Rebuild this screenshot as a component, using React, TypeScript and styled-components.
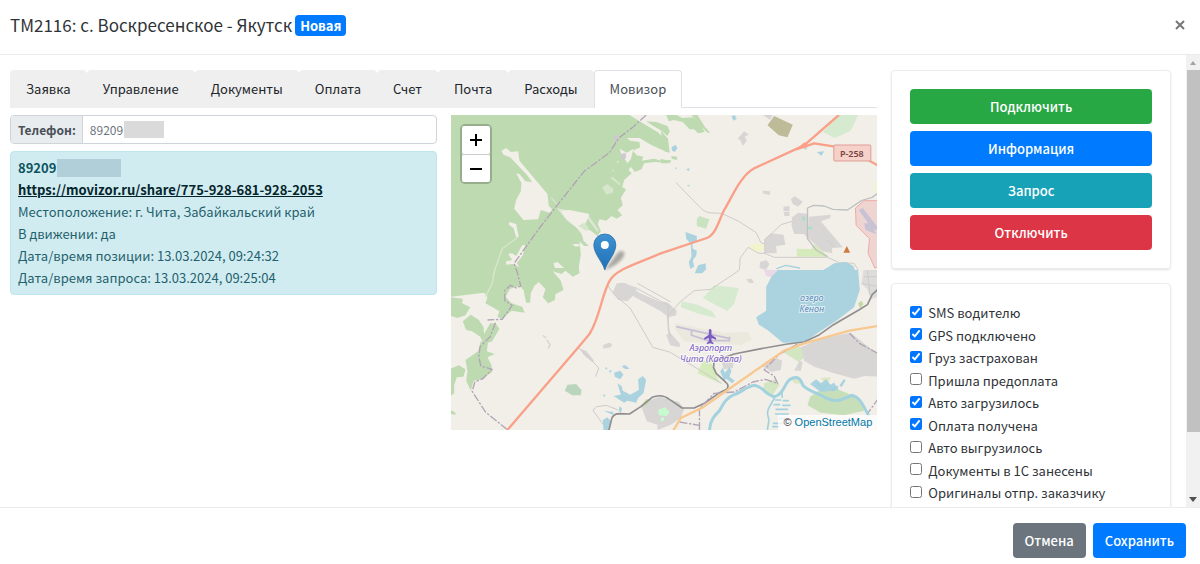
import React from "react";
import styled, { createGlobalStyle } from "styled-components";

const GlobalStyle = createGlobalStyle`
  *, *::before, *::after { box-sizing: border-box; }
  body {
    margin: 0;
    background: #fff;
    color: #2f3337;
    font: 400 13px/22px "Noto Sans CJK SC", "Noto Sans", sans-serif;
  }
  button, input { font: inherit; }
`;

const Modal = styled.div`
  display: flex;
  flex-direction: column;
  height: 100vh;
`;

const Header = styled.header`
  display: flex;
  align-items: center;
  flex: none;
  height: 55px;
  padding: 0 10px 4px;
  gap: 3px;
  border-bottom: 1px solid #e9ecef;
`;

const Title = styled.h1`
  margin: 0;
  font-size: 17px;
  font-weight: 400;
  line-height: 28px;
`;

const Badge = styled.span`
  padding: 0 5px;
  border-radius: 4px;
  background: #007bff;
  color: #fff;
  font-size: 13px;
  font-weight: 700;
  line-height: 21px;
`;

const CloseButton = styled.button`
  display: flex;
  margin-left: auto;
  padding: 5px;
  border: 0;
  background: none;
  color: #777;
`;

const Viewport = styled.div`
  display: flex;
  flex: 1;
  min-height: 0;
`;

const Content = styled.main`
  flex: 1;
  min-width: 0;
  padding: 15px 8px 15px 3px;
  overflow-y: auto;
  scrollbar-width: none;
`;

const Row = styled.div`
  display: flex;
  align-items: flex-start;
`;

const Column = styled.div<{ $share: number }>`
  flex: 0 0 ${(p) => p.$share}%;
  min-width: 0;
  padding: 0 7px;
`;

const TabBar = styled.nav`
  display: flex;
  align-items: flex-start;
  height: 38px;
  border-bottom: 1px solid #dee2e6;
`;

const Tab = styled.button<{ $active?: boolean }>`
  flex: none;
  height: 38px;
  padding: 0 15px;
  border: 1px solid ${(p) => (p.$active ? "#dee2e6" : "#efefef")};
  border-bottom-color: ${(p) => (p.$active ? "#fff" : "#efefef")};
  border-radius: 4px 4px 0 0;
  background: ${(p) => (p.$active ? "#fff" : "#efefef")};
  color: ${(p) => (p.$active ? "#495057" : "#212529")};
`;

const Pane = styled.div`
  display: flex;
  align-items: flex-start;
  margin: 7px -7px 0;
`;

const PhoneGroup = styled.div`
  display: flex;
  height: 29px;
  margin-bottom: 7px;
  border: 1px solid #ced4da;
  border-radius: 4px;
  overflow: hidden;
  font-size: 12px;
`;

const PhoneLabel = styled.label`
  padding: 0 6px 0 7px;
  border-right: 1px solid #ced4da;
  background: #e9ecef;
  color: #495057;
  font-weight: 700;
  line-height: 28px;
`;

const PhoneField = styled.div`
  display: flex;
  align-items: center;
  flex: 1;
  padding-left: 7px;
`;

const PhoneInput = styled.input`
  width: 34px;
  padding: 0;
  border: 0;
  outline: 0;
  color: #6c757d;
`;

const Redaction = styled.span<{ $large?: boolean }>`
  display: inline-block;
  width: ${(p) => (p.$large ? 64 : 40)}px;
  height: ${(p) => (p.$large ? 18 : 17)}px;
  background: ${(p) => (p.$large ? "#b0cfd8" : "#dadada")};
`;

const Alert = styled.section`
  padding: 5px 7px;
  border: 1px solid #bee5eb;
  border-radius: 4px;
  background: #d1ecf1;
  color: #1f616c;
`;

const AlertLine = styled.div<{ $strong?: boolean }>`
  display: flex;
  align-items: center;
  height: 22px;
  gap: 1px;
  color: ${(p) => (p.$strong ? "#0c5460" : "inherit")};
  font-weight: ${(p) => (p.$strong ? 700 : 400)};
`;

const ShareLink = styled.a`
  color: #04252b;
  text-decoration: underline;
`;

const MapFrame = styled.div`
  position: relative;
  height: 315px;
  overflow: hidden;
  background: #f2efe9;
`;

const MapDrawing = styled.svg`
  display: block;
  width: 100%;
  height: 100%;
`;

const ZoomControl = styled.div`
  position: absolute;
  top: 9px;
  left: 9px;
  display: flex;
  flex-direction: column;
  border: 2px solid rgba(0, 0, 0, 0.2);
  border-radius: 5px;
  background-clip: padding-box;
`;

const ZoomButton = styled.button`
  display: flex;
  align-items: center;
  justify-content: center;
  width: 28px;
  height: 28px;
  padding: 0;
  border: 0;
  border-radius: 2px;
  background: #fff;
  color: #000;
  & + & { border-top: 1px solid #ccc; }
`;

const Attribution = styled.div`
  position: absolute;
  right: 0;
  bottom: 0;
  padding: 0 5px;
  background: rgba(255, 255, 255, 0.75);
  color: #333;
  font: 11px/15px "Liberation Sans", Arial, sans-serif;
  a { color: #0078a8; text-decoration: none; }
`;

const Card = styled.section`
  display: flex;
  flex-direction: column;
  padding: 18px;
  margin-bottom: 14px;
  border: 1px solid #ececec;
  border-radius: 4px;
  box-shadow: 0 1px 2px rgba(0, 0, 0, 0.12);
`;

const Button = styled.button<{ $color: string }>`
  height: 35px;
  padding: 0 12px;
  border: 0;
  border-radius: 4px;
  background: ${(p) => p.$color};
  color: #fff;
  font-weight: 500;
`;

const ButtonStack = styled.div`
  display: flex;
  flex-direction: column;
  gap: 7px;
`;

const CheckList = styled.div`
  display: flex;
  flex-direction: column;
  justify-content: space-between;
  min-height: 202px;
`;

const CheckRow = styled.label`
  display: flex;
  align-items: center;
  gap: 6px;
  height: 22px;
`;

const CheckBox = styled.input`
  flex: none;
  width: 12px;
  height: 12px;
  margin: 0 0 3px;
  accent-color: #0075ff;
`;

const ScrollTrack = styled.div`
  display: flex;
  flex-direction: column;
  flex: none;
  width: 14px;
  background: #f1f1f1;
`;

const ScrollArrow = styled.svg`
  display: block;
  flex: none;
  width: 14px;
  height: 15px;
`;

const ScrollThumb = styled.div`
  flex: 0 0 80%;
  margin-left: 1px;
  background: #c1c1c1;
`;

const ScrollSpace = styled.div`
  flex: 1;
`;

const Footer = styled.footer`
  display: flex;
  align-items: center;
  justify-content: flex-end;
  flex: none;
  gap: 7px;
  height: 57px;
  padding: 9px 14px 0;
  border-top: 1px solid #e9ecef;
`;

const tabs = ["Заявка", "Управление", "Документы", "Оплата", "Счет", "Почта", "Расходы", "Мовизор"];

const details = [
  "Местоположение: г. Чита, Забайкальский край",
  "В движении: да",
  "Дата/время позиции: 13.03.2024, 09:24:32",
  "Дата/время запроса: 13.03.2024, 09:25:04",
];

const actions = [
  { text: "Подключить", color: "#28a745" },
  { text: "Информация", color: "#007bff" },
  { text: "Запрос", color: "#17a2b8" },
  { text: "Отключить", color: "#dc3545" },
];

const checks: [string, boolean][] = [
  ["SMS водителю", true],
  ["GPS подключено", true],
  ["Груз застрахован", true],
  ["Пришла предоплата", false],
  ["Авто загрузилось", true],
  ["Оплата получена", true],
  ["Авто выгрузилось", false],
  ["Документы в 1С занесены", false],
  ["Оригиналы отпр. заказчику", false],
];

function CityMap() {
  return (
    <MapDrawing viewBox="0 0 427 315" preserveAspectRatio="xMidYMid slice" role="img" aria-label="Карта">
      <defs>
        <linearGradient id="pin" x1="0" y1="0" x2="0" y2="1">
          <stop offset="0" stopColor="#3f93d2" />
          <stop offset="1" stopColor="#1f6fb5" />
        </linearGradient>
        <filter id="soft" x="-30%" y="-30%" width="160%" height="160%">
          <feGaussianBlur stdDeviation="1.6" />
        </filter>
      </defs>
      <g transform="scale(0.33333) translate(0 -15)" strokeLinejoin="round">
        <rect x="0" y="15" width="1290" height="950" fill="#f2efe9" />

        {/* forest */}
        <g fill="#bddab1">
          <path d="M0 15H536L560 30 596 52 620 66 652 96 657 128 628 117 600 104 566 84 528 84 538 92 566 96 568 112 546 122 558 136 578 140 572 152 610 146 632 152 660 150V158L612 156 580 160 572 178 552 186 540 170 533 180 543 190 520 210 514 232 526 238 510 264 516 286 500 300 514 316 498 326 482 318 466 332 446 328 441 342 450 364 440 378 420 362 400 352 416 312 356 300 330 302 348 330 376 352 392 368 398 392 414 408 400 408 386 394 390 434 384 470 386 490 366 500 344 482 332 492 306 484 330 512 338 540 314 552 312 570 292 580 276 562 284 538 264 516 250 528 240 550 238 578 226 578 218 540 206 528 178 536 164 560 182 580 214 590 222 608 182 602 154 628 140 620 146 604 104 580 110 562 100 548 0 560Z" />
          <path d="M0 562L36 566 34 580 58 592 44 616 20 624 0 618Z" />
          <path d="M36 634L60 614 84 630 98 650 100 672 118 640 134 640 146 656 124 694 100 702 88 680 64 664 46 660Z" />
          <path d="M90 694L112 696 108 724 132 732 110 742 122 766 124 786 92 808 68 812 60 842 46 812 50 782 44 750 82 724Z" />
          <path d="M0 776L24 766 44 778 38 800 18 802 10 826 10 850 0 858Z M0 900L14 908V914L0 912Z" />
          <path d="M586 34L616 36 650 48 657 64 650 78 632 62 604 46Z M646 15H678L694 24 726 22 748 42 762 66 742 70 730 58 716 58 696 36 668 30 654 34Z M722 15H740L762 50 778 68 770 68 748 46Z M630 62L652 86 654 128 638 122Z M630 146L654 152V160H630Z M662 138L680 140 678 150 662 146Z" />
          <path d="M738 326L746 318 776 328 766 356 738 348Z" fill="#c9e3c0" />
          <path d="M342 842L350 824 376 822 392 840 390 856 364 856Z" fill="#b9d6bd" />
        </g>
        <g fill="#f2efe9">
          <path d="M152 122L166 114 180 126 202 124 206 152 290 252 294 288 304 298 296 308 270 300 262 328 218 330 190 296 196 270 210 244 212 220 196 190 206 192 224 214 244 216 228 194 178 142 158 134Z" />
          <path d="M176 336L196 342 204 382 196 382 188 354 174 344Z M172 432L184 430 196 438 214 406 224 406 216 436 198 460 206 472 188 462 166 464 166 454 184 450Z M308 460L320 456 340 474 312 474Z M364 402L384 402 388 408 374 410Z M506 116L528 128 548 116 540 148 530 160 512 132Z" />
          <path d="M318 294L346 300 410 312 444 360 440 366 408 324 382 330 404 372 400 384 376 352 344 326 330 310Z" opacity=".6" />
          <path d="M300 262L322 286M126 500L132 480 154 416 198 384M132 480L124 520 104 560" fill="none" stroke="#d8e6cc" strokeWidth="4" />
        </g>
        <path d="M454 232L470 222 488 236 486 248 466 254Z M478 204L486 200 510 222 506 226Z M482 184L486 178 492 184Z M496 154L504 152 502 162Z M382 348L400 338 414 352 408 364Z" fill="#d5e6cb" />
        <path d="M488 78L496 74 504 92 492 96Z M512 132L524 128 526 144 514 150Z" fill="#cfc7d3" />

        {/* parks and fields */}
        <path d="M1116 66L1140 40 1160 15H1222L1200 62 1152 84Z M756 564L790 526 864 534 850 582 830 602 796 586Z M692 574L740 584 784 604 796 624 746 612 690 592Z" fill="#d6ead0" />
        <path d="M950 46L970 18 1026 44 1010 82 984 76Z" fill="#bdbb98" />
        <path d="M1038 416L1082 418 1086 404 1098 404 1132 440 1038 440Z M756 752L778 752 806 816 818 824 740 790Z" fill="#d6ebbb" />
        <path d="M902 402L936 400 940 420 916 428 896 412Z M1272 215H1290V248H1272Z" fill="#f2f4ce" />
        <path d="M996 726L1030 708 1062 714 1066 738 1044 756Z M940 820L976 806 986 824 964 858 936 842Z" fill="#d3e6c2" />
        <path d="M1078 860L1110 838 1150 834 1190 850 1236 880 1240 902 1180 916 1110 908 1070 886Z" fill="#c6dfb9" />
        <path d="M1018 802L1042 798 1048 822 1030 820Z M1108 804L1140 802 1130 824Z" fill="#dce6c4" />

        {/* built-up areas */}
        <g fill="#d8d6d5">
          <path d="M860 86L880 64 894 74 882 80 888 92 876 108 868 90Z M936 15H966L958 30Z M936 242L958 244 956 256 936 250Z" />
          <path d="M1020 268L1032 258 1056 276 1042 290 1026 282Z M998 290L1016 288V304H998Z M1000 306H1016V318H1000Z" />
          <path d="M1024 322L1042 308 1072 312V386L1060 372 1030 372 1022 346Z M1074 320L1140 314 1138 324 1110 334 1176 412 1144 414V430L1116 424 1072 384Z" />
          <path d="M942 388L960 370 998 374 1004 404 976 408 978 430H942Z M928 456L946 450 956 462 946 480 926 474Z" />
          <path d="M486 546L498 520 520 518 552 532 560 546 656 588 660 612 630 604 546 558 530 574 502 570Z M456 706L474 698 484 702 480 712 458 716Z M388 716L406 722 430 752 424 756 398 734Z" />
          <path d="M630 576L648 576 678 602 676 616 654 622 630 604Z M646 674L658 668 688 702 686 712 658 706Z M886 508L902 506 910 518 896 520Z" />
          <path d="M570 886L592 872 626 860 684 876 700 896 690 924 660 944 620 960 620 944 588 934Z" />
          <path d="M1050 712L1108 686 1200 668 1260 716 1281 732V800L1242 798 1210 806 1150 790 1090 770 1060 752Z M930 766L976 744 994 752 990 780 962 786Z M1030 782L1046 752 1056 756 1050 782Z M812 752L850 748 846 774 818 778Z" />
          <path d="M1238 480H1281V560L1262 568 1248 536 1232 522Z" fill="#dedcda" />
        </g>
        <path d="M622 900L642 892 656 906 648 918 624 916Z M630 924L640 922 640 932 630 934Z" fill="#c8fad0" />
        <path d="M568 892L586 868 600 868 588 884Z M1222 580L1232 572 1238 582 1228 596Z" fill="#c5d9a5" />
        <path d="M940 480H1010L1018 486 966 502 946 498Z" fill="#ead8e6" />
        <path d="M1214 294L1240 272H1290V470L1272 474 1252 430 1256 386 1216 346Z" fill="#eed5d2" stroke="#f0a9a4" strokeWidth="3" />
        <path d="M1224 300L1236 294 1284 356 1280 362 1270 356 1276 372 1244 360 1240 340 1252 340Z" fill="#c9c2d3" />
        <path d="M1054 320H1062V332H1054Z M1072 350H1084V358H1072Z" fill="#a8dfc3" />

        {/* thin roads */}
        <g fill="none" stroke="#cdcccb" strokeWidth="3">
          <path d="M676 218L732 276 756 300 772 308 812 310 864 334 916 368 930 398 942 402M942 430V388L964 370 990 344 1024 334" />
          <path d="M866 480L868 444 892 412 924 430 942 430 970 442 1130 442 1166 458 1210 460 1222 480" />
          <path d="M1070 386V294L1088 286 1120 288 1146 298 1190 300 1232 272 1264 262 1284 248M1070 386L1096 420 1130 440" stroke="#bfc0c1" strokeWidth="4" />
          <path d="M472 528L490 554 538 594 576 660 606 712 656 726 690 746 760 788 812 820" />
          <path d="M384 714L420 748 444 774 434 800M426 900L438 890 466 886 502 900M426 900L462 950M866 480L840 498 780 538 730 542 690 574 660 608 650 618 656 672" />
          <path d="M552 532L660 590M560 520L660 576M652 590V660L660 680" />
          <path d="M1232 520L1284 530M1240 500H1284M1250 480L1258 556M1130 390L1150 410" />
          <path d="M276 676L286 684M288 690L298 704 292 716" stroke="#dad8d5" strokeWidth="5" />
        </g>
        <path d="M674 640L820 668 890 666 904 690 870 706 700 694 674 660Z" fill="#ebe9dd" />

        {/* water */}
        <g fill="#aad3df">
          <path d="M982 480H1222L1227 540 1210 592 1160 630 1096 672 1060 698 996 698 950 660 924 644 916 622 946 602 946 530 962 500Z" />
          <path d="M1128 474L1150 460 1186 456 1208 468 1212 480 1222 484H1110Z" />
          <path d="M704 366L738 378 738 392 724 396 726 416 738 422 736 438 726 450 730 470 718 476 714 456 722 440 720 402 706 386Z M742 466L764 460 766 478 754 490H732Z" />
          <path d="M662 112L674 104 680 114 672 126 664 122Z M842 18L852 16 858 26 848 32Z M1098 126L1120 124 1112 138Z M1054 112L1068 114 1066 120Z M672 174L678 172V178Z M706 178L716 174 714 184Z M708 226L716 224V230Z" />
          <path d="M500 820L512 828 516 842 538 854 564 840 562 808 576 798 586 810 578 850 562 864 556 878 530 872 520 878 488 858 510 854Z M490 788L508 782 518 794 508 808 492 800Z M512 768L524 766 536 776 524 778Z M462 774L468 772 470 780Z M476 780L484 782 476 790Z M456 852L464 856 460 862Z M506 888L514 896 510 908 504 902Z M456 930L470 922 482 936 476 960H458Z M458 902L488 906 486 914Z" />
          <path d="M808 784L816 774 822 788 836 772 842 782 836 800 852 812 844 820 826 806 820 812Z M1078 822L1096 808 1110 820 1126 808 1138 824 1150 818 1164 840 1110 846Z M1166 826L1180 806 1184 812 1172 832Z" />
        </g>
        <g fill="none" stroke="#a3d2df" strokeLinecap="round" strokeLinejoin="round">
          <path d="M776 960C778 930 792 916 806 902C818 880 828 862 850 854C872 848 886 828 912 826C940 832 944 856 972 860C1000 852 1000 820 1018 808C1040 796 1050 806 1056 826C1076 848 1100 846 1130 866C1160 880 1180 866 1202 856C1230 862 1238 890 1252 914" strokeWidth="9" />
          <path d="M1100 820L1116 838 1132 820 1146 842 1160 830M972 860C966 880 944 896 952 920C958 934 950 946 950 960" strokeWidth="5" />
          <path d="M994 848V862M974 870H990M998 872H1012M970 884H986M996 886H1018M976 898H1010M974 912H1012M984 926H1008M968 940H998M966 950H984" strokeWidth="5" />
          <path d="M978 476L1004 466 1046 474" strokeWidth="4" />
        </g>

        {/* railway */}
        <path d="M474 962L482 928Q486 912 504 911L536 912 570 890 604 862Q632 850 656 868L694 894 730 894 764 878 806 848 828 838Q836 826 826 818L796 790 788 772 790 754 850 732 920 718 1010 702 1060 696 1106 674 1148 644 1224 600 1250 584 1264 554 1281 538" fill="none" stroke="#8f8f8f" strokeWidth="5" />

        {/* administrative boundaries */}
        <g fill="none" stroke="#b3a3b6" strokeWidth="4" strokeDasharray="24 5 7 5">
          <path d="M586 15L548 50 504 84 476 128 400 184 316 290 266 354 210 432 190 460 200 490 210 528 196 534 180 526 162 540 162 572 184 586 154 628 110 630M134 638L118 680 88 710 84 740 90 768 124 778 96 806 72 816 64 844 104 906 168 958" />
          <path d="M686 936L746 946M746 960V896L790 850 850 846 906 816 944 808 980 820 970 798 940 780 984 734 1040 702M1196 670L1226 700 1284 732M1284 864L1252 908" />
        </g>

        {/* airfield */}
        <path d="M676 650L838 686M722 662V676L772 692 836 692V680" fill="none" stroke="#c7bfd6" strokeWidth="5" />

        {/* main roads */}
        <path d="M666 964L690 924 756 892 830 840 1000 722 1060 700 1196 662 1281 648" fill="none" stroke="#f7c88f" strokeWidth="7" />
        <path d="M168 962L384 710 416 672C450 620 456 530 484 502C510 474 560 460 630 430L768 384C796 374 806 326 820 300C840 270 866 200 908 176L1060 106 1164 15M1036 118L1090 100 1152 110 1200 124 1245 146 1284 168" fill="none" stroke="#fa9f88" strokeWidth="7" />
        <path d="M1036 118L1062 96 1070 112Z" fill="#fa9f88" />
        <path d="M1178 428L1188 408 1198 428Z" fill="#cf7b3f" />
        <path d="M774 660l4-4 4 4v14l14 10v5l-14-5v10l6 5v4l-10-3-10 3v-4l6-5v-10l-14 5v-5l14-10Z" fill="#7a5bc5" />
      </g>

      <rect x="383" y="30" width="37" height="16" rx="1" fill="#f6d1ca" stroke="#df9d94" />
      <g fontFamily="Noto Sans, sans-serif" textAnchor="middle">
        <text x="401" y="42" fontSize="9" fontWeight="600" fill="#78453f">Р-258</text>
        <g fontStyle="italic" fontSize="9" stroke="#fff" strokeWidth="2" strokeOpacity=".6" paintOrder="stroke">
          <g fill="#5d8cba" letterSpacing="0">
            <text x="361" y="186">озеро</text>
            <text x="361" y="197">Кенон</text>
          </g>
          <text x="260" y="236" fill="#7a5bc5">Аэропорт</text>
          <text x="260" y="247" fill="#7a5bc5">Чита (Кадала)</text>
        </g>
      </g>

      <path d="M154 155L166 139C170 134 175 136 173 141C170 147 162 152 154 155Z" fill="#000" opacity=".3" filter="url(#soft)" />
      <path d="M154 155C152 147 143 139 143 130A11 11 0 0 1 165 130C165 139 156 147 154 155Z" fill="url(#pin)" stroke="#2d6fa8" strokeWidth=".8" />
      <circle cx="154" cy="130" r="4" fill="#fff" />
    </MapDrawing>
  );
}

export default function App() {
  return (
    <>
      <GlobalStyle />
      <Modal>
        <Header>
          <Title>ТМ2116: с. Воскресенское - Якутск</Title>
          <Badge>Новая</Badge>
          <CloseButton aria-label="Закрыть">
            <svg width="10" height="10" viewBox="0 0 10 10" stroke="currentColor" strokeWidth="2">
              <path d="M1 1L9 9M9 1L1 9" />
            </svg>
          </CloseButton>
        </Header>

        <Viewport>
          <Content>
            <Row>
              <Column $share={75}>
                <TabBar>
                  {tabs.map((name) => (
                    <Tab key={name} $active={name === "Мовизор"}>{name}</Tab>
                  ))}
                </TabBar>
                <Pane>
                  <Column $share={50}>
                    <PhoneGroup>
                      <PhoneLabel htmlFor="phone">Телефон:</PhoneLabel>
                      <PhoneField>
                        <PhoneInput id="phone" defaultValue="89209" />
                        <Redaction />
                      </PhoneField>
                    </PhoneGroup>
                    <Alert>
                      <AlertLine $strong>89209<Redaction $large /></AlertLine>
                      <AlertLine $strong>
                        <ShareLink href="https://movizor.ru/share/775-928-681-928-2053">
                          https://movizor.ru/share/775-928-681-928-2053
                        </ShareLink>
                      </AlertLine>
                      {details.map((line) => (
                        <AlertLine key={line}>{line}</AlertLine>
                      ))}
                    </Alert>
                  </Column>
                  <Column $share={50}>
                    <MapFrame>
                      <CityMap />
                      <ZoomControl>
                        <ZoomButton aria-label="Приблизить">
                          <svg width="12" height="12" viewBox="0 0 12 12" stroke="currentColor" strokeWidth="2">
                            <path d="M0 6H12M6 0V12" />
                          </svg>
                        </ZoomButton>
                        <ZoomButton aria-label="Отдалить">
                          <svg width="12" height="12" viewBox="0 0 12 12" stroke="currentColor" strokeWidth="2">
                            <path d="M0 6H12" />
                          </svg>
                        </ZoomButton>
                      </ZoomControl>
                      <Attribution>
                        © <a href="https://www.openstreetmap.org/copyright">OpenStreetMap</a>
                      </Attribution>
                    </MapFrame>
                  </Column>
                </Pane>
              </Column>

              <Column $share={25}>
                <Card>
                  <ButtonStack>
                    {actions.map((a) => (
                      <Button key={a.text} $color={a.color}>{a.text}</Button>
                    ))}
                  </ButtonStack>
                </Card>
                <Card>
                  <CheckList>
                    {checks.map(([text, on]) => (
                      <CheckRow key={text}>
                        <CheckBox type="checkbox" defaultChecked={on} />
                        {text}
                      </CheckRow>
                    ))}
                  </CheckList>
                </Card>
              </Column>
            </Row>
          </Content>
          <ScrollTrack aria-hidden>
            <ScrollArrow viewBox="0 0 14 15"><path d="M4 10L7 6 10 10Z" fill="#a3a3a3" /></ScrollArrow>
            <ScrollThumb />
            <ScrollSpace />
            <ScrollArrow viewBox="0 0 14 15"><path d="M3 5L7 10 11 5Z" fill="#505050" /></ScrollArrow>
          </ScrollTrack>
        </Viewport>

        <Footer>
          <Button $color="#6c757d">Отмена</Button>
          <Button $color="#007bff">Сохранить</Button>
        </Footer>
      </Modal>
    </>
  );
}
